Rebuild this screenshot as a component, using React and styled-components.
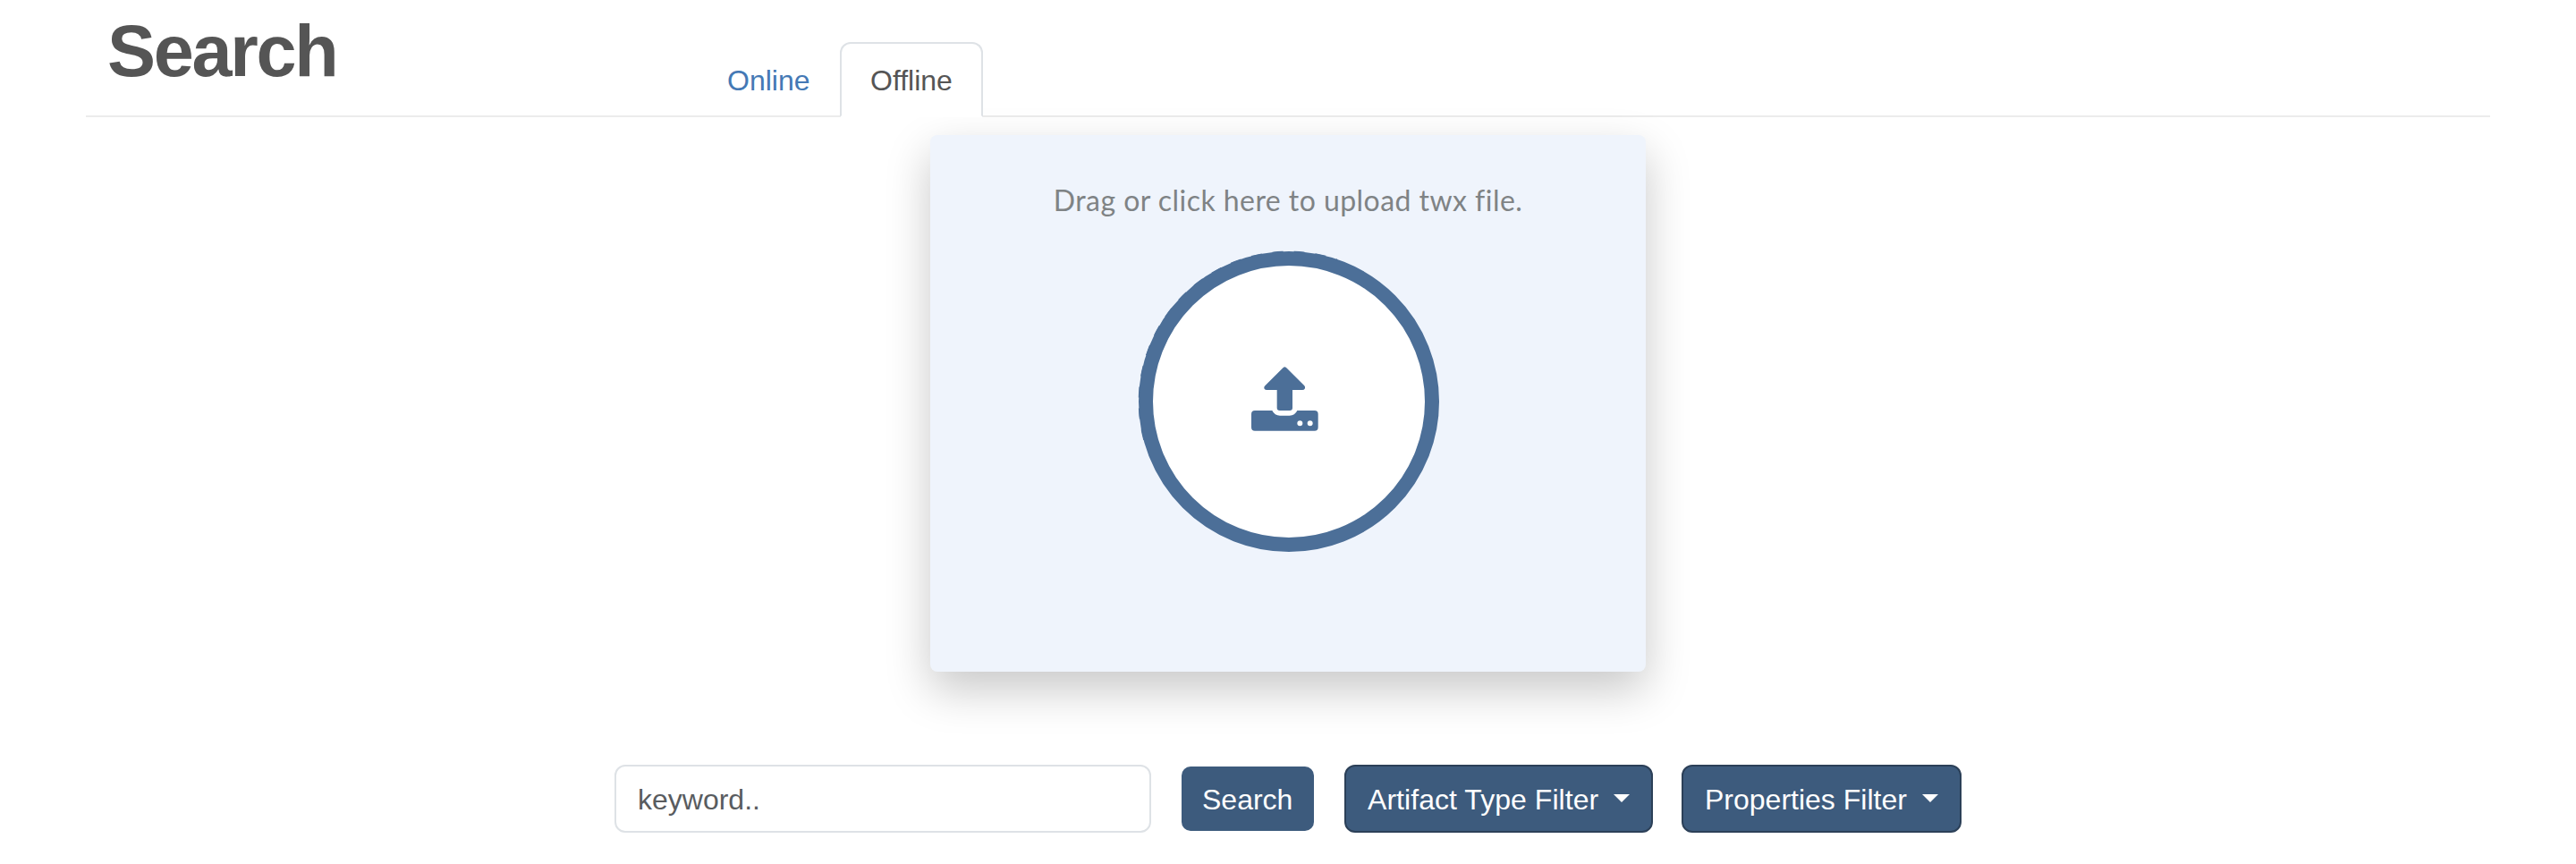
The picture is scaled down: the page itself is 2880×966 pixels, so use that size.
import React from "react";
import styled, { createGlobalStyle } from "styled-components";

const GlobalStyle = createGlobalStyle`
  *, *::before, *::after { box-sizing: border-box; }
  body {
    margin: 0;
    background: #fff;
    color: #555;
    font-family: "Liberation Sans", Arial, sans-serif;
    font-size: 32px;
    line-height: 48px;
  }
`;

const Page = styled.main`
  height: 966px;
  padding: 0 96px;
  overflow: hidden;
`;

const Header = styled.header`
  display: flex;
  align-items: flex-end;
  height: 131px;
  border-bottom: 2px solid #ececec;
`;

const Title = styled.h1`
  align-self: flex-start;
  width: 683px;
  margin: 9px 0 0;
  padding-left: 24px;
  font-size: 81px;
  line-height: 96px;
  font-weight: 700;
  letter-spacing: -2.3px;
`;

const Tabs = styled.nav`
  display: flex;
  margin-bottom: -2px;
`;

const Tab = styled.a`
  width: 160px;
  height: 84px;
  padding: 17px 0 0 32px;
  border: 2px solid ${(p) => (p.$active ? "#dee2e6" : "transparent")};
  border-bottom-color: ${(p) => (p.$active ? "#fff" : "transparent")};
  border-radius: 12px 12px 0 0;
  background: ${(p) => (p.$active ? "#fff" : "transparent")};
  color: ${(p) => (p.$active ? "#555" : "#4479b5")};
  font-variant-ligatures: none;
`;

const DropCard = styled.section`
  display: flex;
  flex-direction: column;
  align-items: center;
  width: 800px;
  height: 600px;
  margin: 20px auto 0;
  padding-top: 49px;
  border-radius: 8px;
  background: #eff4fc;
  box-shadow: 0 20px 50px 0 rgba(0, 0, 0, 0.22);
`;

const DropText = styled.p`
  margin: 0;
  color: #7f8385;
  font-family: Lato, sans-serif;
  letter-spacing: 0.45px;
  white-space: nowrap;
  font-variant-ligatures: none;
`;

const Circle = styled.div`
  position: relative;
  display: flex;
  align-items: center;
  justify-content: center;
  width: 336px;
  height: 336px;
  margin: 33px 0 0 2px;
  padding: 0 10px 6px 0;
  border: 16px solid #4c6f98;
  border-radius: 50%;
  background: #fff;
`;

const DashedEdge = styled.svg`
  position: absolute;
  top: -16px;
  left: -16px;
  overflow: visible;
`;

const SearchBar = styled.form`
  display: flex;
  align-items: center;
  margin: 104px 0 0 591px;
`;

const Keyword = styled.input`
  width: 600px;
  height: 76px;
  margin-right: 34px;
  padding: 2px 24px 0;
  border: 2px solid #dee2e6;
  border-radius: 12px;
  outline: 0;
  color: #595c5f;
  font: inherit;
  &::placeholder { color: #595c5f; opacity: 1; }
`;

const Button = styled.button`
  display: flex;
  align-items: center;
  width: ${(p) => p.$width}px;
  height: ${(p) => (p.$outlined ? 76 : 72)}px;
  margin-right: ${(p) => p.$gap || 0}px;
  padding: 2px 0 0 ${(p) => (p.$outlined ? 24 : 23)}px;
  border: ${(p) => (p.$outlined ? "2px solid #2c4058" : "0")};
  border-radius: ${(p) => (p.$outlined ? 12 : 10)}px;
  background: #3d5b7d;
  color: #fff;
  font: inherit;
  letter-spacing: ${(p) => p.$tracking || 0}px;
  white-space: nowrap;
`;

const Caret = styled.span`
  margin: -4px 0 0 17px;
  border: 9px solid transparent;
  border-top: 9px solid #fff;
  border-bottom: 0;
`;

const UploadIcon = () => (
  <svg width="75" height="72" viewBox="0 0 225 216" fill="#4c6f98" aria-hidden="true">
    <path d="M107 3Q112 -2 117 3L178 64Q182 69 179 74Q177 78 171 78H138V138Q138 147 129 147H95Q86 147 86 138V78H52Q46 78 44 74Q41 69 46 64Z" />
    <path
      fillRule="evenodd"
      d="M12 147H70Q78 164 96 164H128Q146 164 154 147H212Q224 147 224 159V203Q224 215 212 215H12Q0 215 0 203V159Q0 147 12 147ZM163 181a9 9 0 1 0 0 18a9 9 0 1 0 0-18ZM197 181a9 9 0 1 0 0 18a9 9 0 1 0 0-18Z"
    />
  </svg>
);

export default function App() {
  return (
    <>
      <GlobalStyle />
      <Page>
        <Header>
          <Title>Search</Title>
          <Tabs>
            <Tab>Online</Tab>
            <Tab $active>Offline</Tab>
          </Tabs>
        </Header>
        <DropCard>
          <DropText>Drag or click here to upload twx file.</DropText>
          <Circle>
            <DashedEdge width="336" height="336" viewBox="0 0 336 336" fill="none" aria-hidden="true">
              <path
                d="M6 211A167.7 167.7 0 0 1 222 9.3"
                stroke="#4c6f98"
                strokeWidth="1.4"
                strokeDasharray="12 12"
              />
            </DashedEdge>
            <UploadIcon />
          </Circle>
        </DropCard>
        <SearchBar>
          <Keyword placeholder="keyword.." />
          <Button type="button" $width={148} $gap={34}>Search</Button>
          <Button type="button" $outlined $width={345} $gap={32} $tracking={0.05}>
            Artifact Type Filter
            <Caret />
          </Button>
          <Button type="button" $outlined $width={313}>
            Properties Filter
            <Caret />
          </Button>
        </SearchBar>
      </Page>
    </>
  );
}
